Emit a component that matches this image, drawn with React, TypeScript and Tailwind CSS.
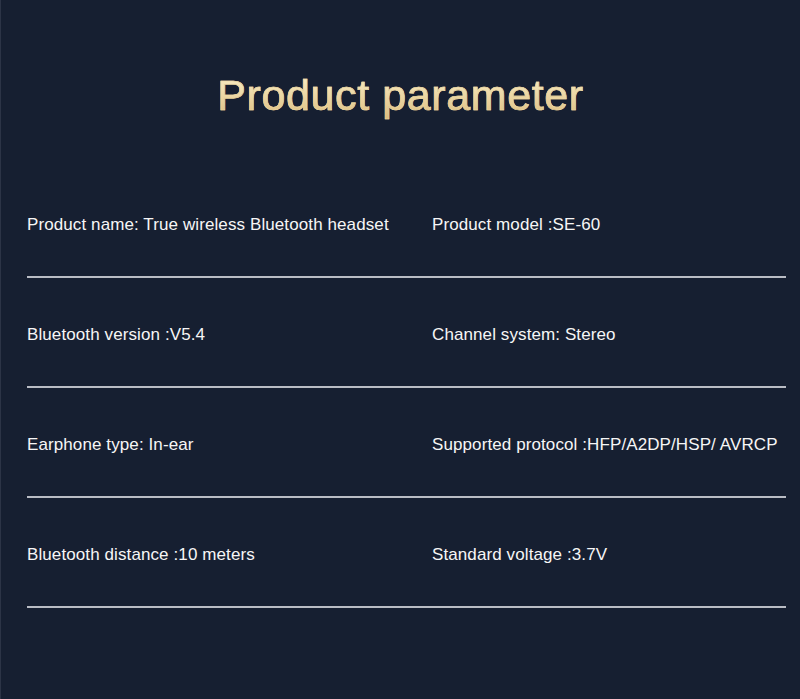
const rows: [string, string][] = [
  ["Product name: True wireless Bluetooth headset", "Product model :SE-60"],
  ["Bluetooth version :V5.4", "Channel system: Stereo"],
  ["Earphone type: In-ear", "Supported protocol :HFP/A2DP/HSP/ AVRCP"],
  ["Bluetooth distance :10 meters", "Standard voltage :3.7V"],
];

export default function App() {
  return (
    <div className="w-[800px] h-[699px] bg-[#161f31] border-l border-[#2c3446] font-['Liberation_Sans',Arial,sans-serif] overflow-hidden">
      {/* Title */}
      <div className="pt-[70px] flex justify-center">
        <h1 className="text-[43px] leading-[50px] tracking-[0.6px] bg-linear-to-b from-[#fdf3cf] to-[#dcbc7c] bg-clip-text text-transparent [-webkit-text-stroke:0.6px_#eed9a0]">
          Product parameter
        </h1>
      </div>

      {/* Parameter rows */}
      <div className="mt-[48px] pl-[26px] pr-[14px]">
        {rows.map(([a, b]) => (
          <div
            key={a}
            className="grid grid-cols-[405px_1fr] pt-[47px] pb-[41px] border-b-2 border-[#b9bcc4] text-[17px] leading-5 tracking-[0.1px] text-[#f6f6f6]"
          >
            <span>{a}</span>
            <span>{b}</span>
          </div>
        ))}
      </div>
    </div>
  );
}
